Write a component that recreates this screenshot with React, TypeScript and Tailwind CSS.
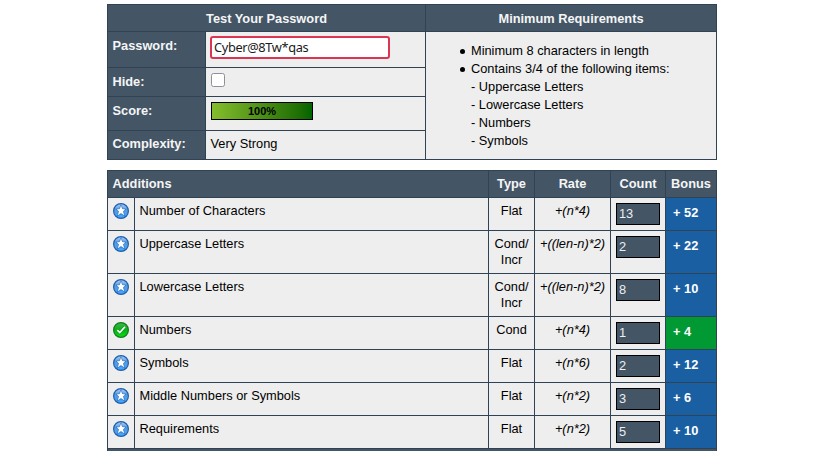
import React from "react";

const HEAD = "bg-[#445566] text-[#f5f5f5] font-bold";

const rows = [
  { label: "Number of Characters", type: ["Flat"], rate: "+(n*4)", count: "13", bonus: "+ 52", pass: false },
  { label: "Uppercase Letters", type: ["Cond/", "Incr"], rate: "+((len-n)*2)", count: "2", bonus: "+ 22", pass: false },
  { label: "Lowercase Letters", type: ["Cond/", "Incr"], rate: "+((len-n)*2)", count: "8", bonus: "+ 10", pass: false },
  { label: "Numbers", type: ["Cond"], rate: "+(n*4)", count: "1", bonus: "+ 4", pass: true },
  { label: "Symbols", type: ["Flat"], rate: "+(n*6)", count: "2", bonus: "+ 12", pass: false },
  { label: "Middle Numbers or Symbols", type: ["Flat"], rate: "+(n*2)", count: "3", bonus: "+ 6", pass: false },
  { label: "Requirements", type: ["Flat"], rate: "+(n*2)", count: "5", bonus: "+ 10", pass: false },
];

const STAR = "M8 3 L9.2 6.1 L12.1 6.4 L9.9 8.5 L11.2 12.2 L8 10 L4.8 12.2 L6.1 8.5 L3.9 6.4 L6.8 6.1 Z";

function StarIcon() {
  return (
    <svg width="16" height="16" viewBox="0 0 16 16" className="block">
      <defs>
        <linearGradient id="blueBall" x1="0" y1="0" x2="0" y2="1">
          <stop offset="0" stopColor="#a9cdf3" />
          <stop offset="0.45" stopColor="#569be4" />
          <stop offset="1" stopColor="#45a5fb" />
        </linearGradient>
      </defs>
      <circle cx="8" cy="8" r="7.4" fill="url(#blueBall)" stroke="#1d5fae" strokeWidth="1.2" />
      <path d={STAR} fill="none" stroke="#2467b5" strokeWidth="1.6" strokeOpacity="0.7" />
      <path d={STAR} fill="#fff" stroke="#fff" strokeWidth="0.2" />
    </svg>
  );
}

function CheckIcon() {
  return (
    <svg width="16" height="16" viewBox="0 0 16 16" className="block">
      <defs>
        <linearGradient id="greenBall" x1="0" y1="0" x2="0" y2="1">
          <stop offset="0" stopColor="#3cb94c" />
          <stop offset="0.5" stopColor="#08b016" />
          <stop offset="1" stopColor="#08e012" />
        </linearGradient>
      </defs>
      <circle cx="8" cy="8" r="7.4" fill="url(#greenBall)" stroke="#147a22" strokeWidth="1.2" />
      <path d="M4.3 8.2 L6.8 10.6 L12 4.8" fill="none" stroke="#0b7a18" strokeWidth="2.8" strokeOpacity="0.6" />
      <path d="M4.3 8.2 L6.8 10.6 L12 4.8" fill="none" stroke="#fff" strokeWidth="1.7" />
    </svg>
  );
}

function Bullet() {
  return <span className="mt-[7px] mr-[6px] h-[5px] w-[5px] shrink-0 rounded-full bg-black" />;
}

export default function App() {
  return (
    <div className="h-[451px] w-[836px] overflow-hidden bg-white pt-1 pl-[107px] font-['Liberation_Sans',Arial,sans-serif] text-[12.8px] leading-4 text-black">
      <div className="grid w-[610px] grid-cols-[97px_219px_290px] grid-rows-[26px_35px_28px_33px_28px] gap-px border border-[#2f4354] bg-[#2f4354]">
        <div className={`${HEAD} col-span-2 pt-[6px] text-center`}>Test Your Password</div>
        <div className={`${HEAD} pt-[6px] text-center`}>Minimum Requirements</div>

        <div className={`${HEAD} pt-[6px] pl-[4.5px]`}>Password:</div>
        <div className="bg-[#eee] pt-1 pl-1">
          <div className="h-[23px] w-[180px] rounded-[3px] border-2 border-[#dc3553] bg-white pl-[2px] font-['Noto_Sans',sans-serif] text-[12.8px] leading-[19px] tracking-[-0.36px] text-[#1a1a1a]">
            Cyber@8Tw*qas
          </div>
        </div>
        <div className="row-span-4 bg-[#eee] pt-[10px] pl-[34px] leading-[18px]">
          <ul>
            <li className="flex">
              <Bullet />
              <span>Minimum 8 characters in length</span>
            </li>
            <li className="flex">
              <Bullet />
              <span>
                Contains 3/4 of the following items:
                <br />- Uppercase Letters
                <br />- Lowercase Letters
                <br />- Numbers
                <br />- Symbols
              </span>
            </li>
          </ul>
        </div>

        <div className={`${HEAD} pt-[6px] pl-[4.5px]`}>Hide:</div>
        <div className="bg-[#eee] pt-[5px] pl-[5px]">
          <div className="h-[14px] w-[14px] rounded-[2.5px] border border-[#8f8f9d] bg-white" />
        </div>

        <div className={`${HEAD} pt-[6px] pl-[4.5px]`}>Score:</div>
        <div className="bg-[#eee] pt-[5px] pl-[5px]">
          <div className="h-[18px] w-[102px] border border-black bg-linear-to-r from-[#84bd2d] to-[#006400] text-center text-[11px] leading-[17px] font-bold">
            100%
          </div>
        </div>

        <div className={`${HEAD} pt-[5px] pl-[4.5px]`}>Complexity:</div>
        <div className="bg-[#eee] pt-[5px] pl-[4.5px]">Very Strong</div>
      </div>

      <div className="mt-[10px] grid w-[610px] grid-cols-[26px_353px_45px_75px_54px_50px] grid-rows-[26px_32px_42px_42px_32px_32px_32px_32px_26px] gap-px border border-[#2f4354] bg-[#2f4354]">
        <div className={`${HEAD} col-span-2 pt-[5px] pl-[4.5px]`}>Additions</div>
        <div className={`${HEAD} pt-[5px] text-center`}>Type</div>
        <div className={`${HEAD} pt-[5px] text-center`}>Rate</div>
        <div className={`${HEAD} pt-[5px] text-center`}>Count</div>
        <div className={`${HEAD} pt-[5px] text-center`}>Bonus</div>

        {rows.map((r) => (
          <React.Fragment key={r.label}>
            <div className="bg-[#eee] pt-[5px] pl-[5px]">{r.pass ? <CheckIcon /> : <StarIcon />}</div>
            <div className="bg-[#eee] pt-[5px] pl-[4.5px]">{r.label}</div>
            <div className="bg-[#eee] pt-[5px] text-center">
              {r.type.map((t) => (
                <div key={t}>{t}</div>
              ))}
            </div>
            <div className="bg-[#eee] pt-[5px] text-center italic">{r.rate}</div>
            <div className="bg-[#eee] pt-[5px] pl-[5px]">
              <div className="h-[22px] w-11 border border-black bg-[#445566] pl-[2px] leading-[20px] text-[#eee]">
                {r.count}
              </div>
            </div>
            <div
              className={`pt-[7px] pl-[7px] font-bold text-white ${r.pass ? "bg-[#009933]" : "bg-[#1b5fa3]"}`}
            >
              {r.bonus}
            </div>
          </React.Fragment>
        ))}

        <div className={`${HEAD} col-span-6`} />
      </div>
    </div>
  );
}
